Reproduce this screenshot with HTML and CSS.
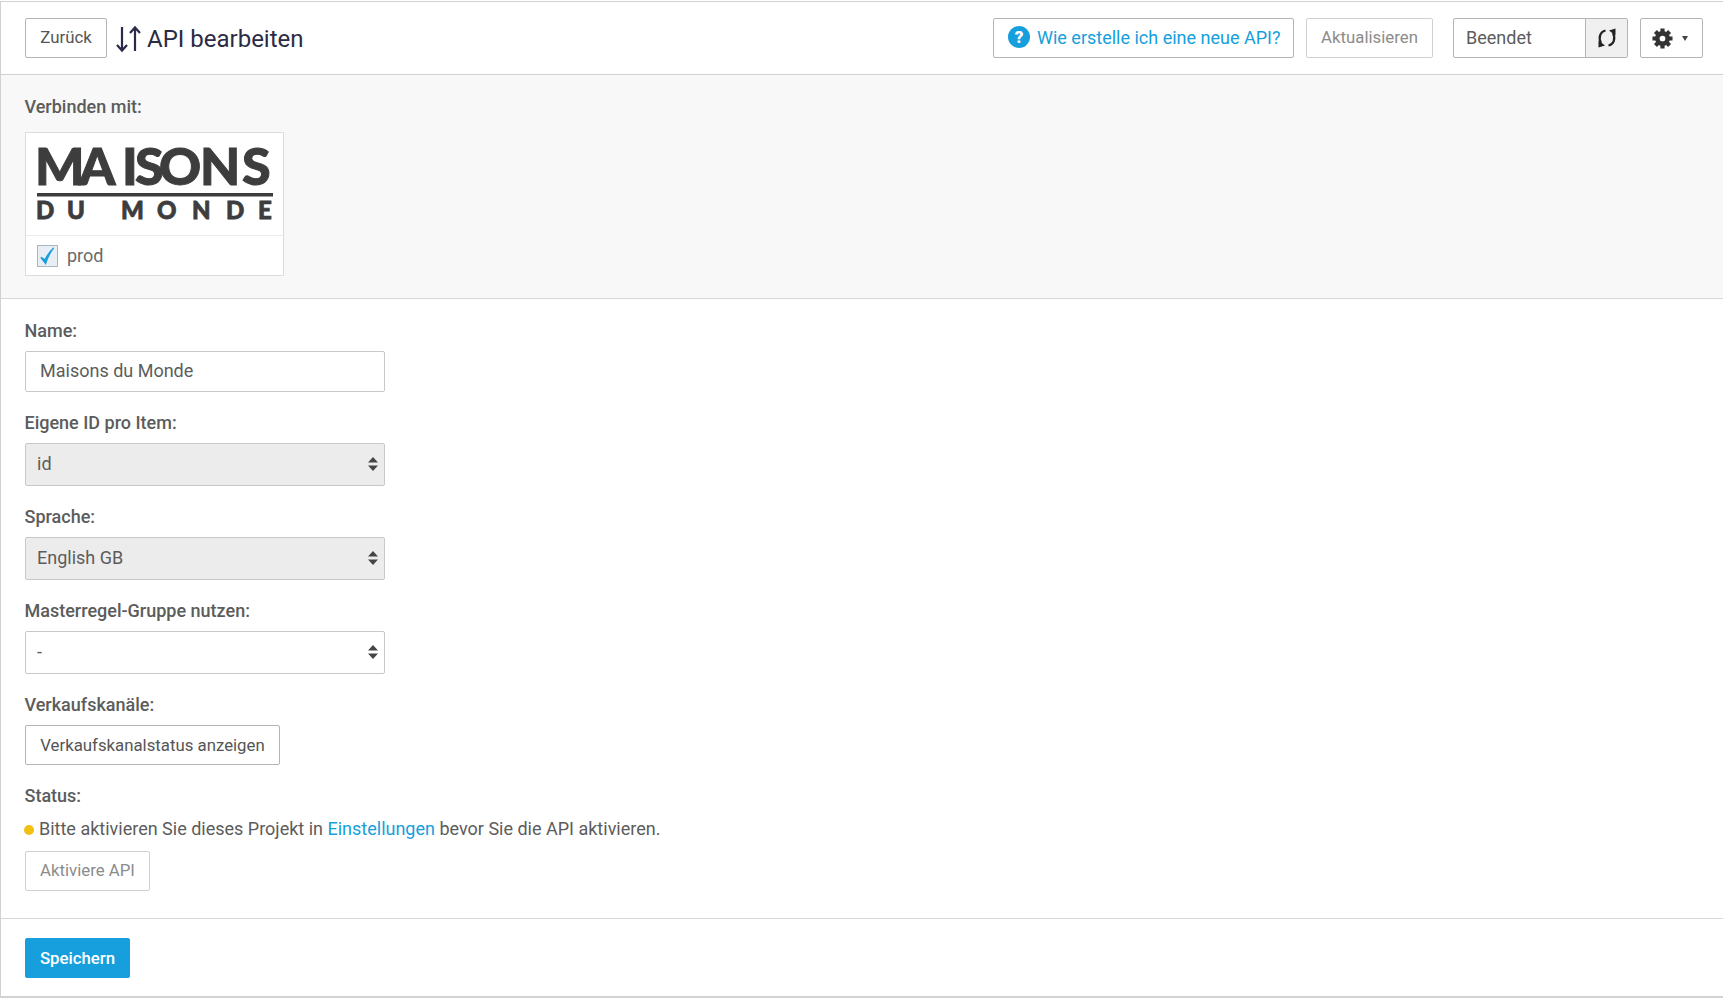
FILE: index.html
```html
<!DOCTYPE html>
<html lang="de">
<head>
<meta charset="utf-8">
<title>API bearbeiten</title>
<link rel="stylesheet" href="styles.css">
</head>
<body>
<main class="panel">
  <header class="topbar">
    <button class="btn back-btn" type="button">Zurück</button>
    <svg class="sort-icon" width="26" height="28" viewBox="0 0 26 28" aria-hidden="true">
      <path d="M7 2V25M2 20L7 25.5L12 20M20 26V3M15 8L20 2.5L25 8" fill="none" stroke="#2a2a4a" stroke-width="2.2"/>
    </svg>
    <h1 class="title">API bearbeiten</h1>
    <div class="spacer"></div>
    <a class="btn help-btn" href="#"><span class="help-dot">?</span>Wie erstelle ich eine neue API?</a>
    <button class="btn muted update-btn" type="button">Aktualisieren</button>
    <div class="status-group">
      <span class="status-value">Beendet</span>
      <span class="status-refresh">
        <svg width="20" height="20" viewBox="0 0 20 20" aria-hidden="true">
          <path d="M8.5 2.5C3.5 3.5 1 9 4 15M11.5 17.5C16.5 16.5 19 11 16 5" fill="none" stroke="#222" stroke-width="2.2"/>
          <path d="M1.5 12.5L8 17.5L1.5 19.5ZM18.5 7.5L12 2.5L18.5 0.5Z" fill="#222"/>
        </svg>
      </span>
    </div>
    <button class="btn gear-btn" type="button" aria-label="Einstellungen">
      <svg width="21" height="21" viewBox="0 0 22 22" aria-hidden="true">
        <circle cx="11" cy="11" r="5.4" fill="none" stroke="#333" stroke-width="4.8"/>
        <g stroke="#333" stroke-width="4.4">
          <path d="M11 0.5V5M11 17V21.5M0.5 11H5M17 11H21.5M3.6 3.6L6.7 6.7M15.3 15.3L18.4 18.4M18.4 3.6L15.3 6.7M6.7 15.3L3.6 18.4"/>
        </g>
      </svg>
      <span class="caret"></span>
    </button>
  </header>

  <section class="connect">
    <div class="label">Verbinden mit:</div>
    <div class="shop-card">
      <div class="shop-logo">
        <svg width="259" height="103" viewBox="0 0 259 103" role="img" aria-label="Maisons du Monde">
          <text class="logo-big" y="52" x="9 53 96 109 133 174 216">MAISONS</text>
          <rect x="11" y="60" width="236" height="3.5" fill="#3d3d3d"/>
          <text class="logo-small" y="86" x="10 41 78 95 131 166 200 232">DU MONDE</text>
        </svg>
      </div>
      <label class="shop-check">
        <span class="checkbox">
          <svg width="20" height="20" viewBox="0 0 20 20" aria-hidden="true">
            <path d="M3 11.5L8 18C10 11.5 12.5 6.5 16.5 1.5C12.5 5 9.5 9.5 7.5 14Z" fill="#169fdc" stroke="#169fdc" stroke-width="1.4"/>
          </svg>
        </span>
        prod
      </label>
    </div>
  </section>

  <section class="form">
    <div class="field">
      <label class="label">Name:</label>
      <input class="control text-input" type="text" value="Maisons du Monde">
    </div>
    <div class="field">
      <label class="label">Eigene ID pro Item:</label>
      <div class="select-wrap">
        <select class="control select disabled"><option>id</option></select>
        <svg class="select-arrows" width="10" height="14" viewBox="0 0 10 14" aria-hidden="true"><path d="M5 0L10 5.5H0ZM5 14L0 8.5H10Z" fill="#444"/></svg>
      </div>
    </div>
    <div class="field">
      <label class="label">Sprache:</label>
      <div class="select-wrap">
        <select class="control select disabled"><option>English GB</option></select>
        <svg class="select-arrows" width="10" height="14" viewBox="0 0 10 14" aria-hidden="true"><path d="M5 0L10 5.5H0ZM5 14L0 8.5H10Z" fill="#444"/></svg>
      </div>
    </div>
    <div class="field">
      <label class="label">Masterregel-Gruppe nutzen:</label>
      <div class="select-wrap">
        <select class="control select"><option>-</option></select>
        <svg class="select-arrows" width="10" height="14" viewBox="0 0 10 14" aria-hidden="true"><path d="M5 0L10 5.5H0ZM5 14L0 8.5H10Z" fill="#444"/></svg>
      </div>
    </div>
    <div class="field">
      <label class="label">Verkaufskanäle:</label>
      <button class="btn channel-btn" type="button">Verkaufskanalstatus anzeigen</button>
    </div>
    <div class="field status-field">
      <label class="label">Status:</label>
      <p class="status-line"><span class="dot"></span>Bitte aktivieren Sie dieses Projekt in <a href="#">Einstellungen</a> bevor Sie die API aktivieren.</p>
      <button class="btn muted activate-btn" type="button">Aktiviere API</button>
    </div>
  </section>

  <footer class="actions">
    <button class="btn save-btn" type="button">Speichern</button>
  </footer>
</main>
</body>
</html>
```

FILE: styles.css
```css
* { box-sizing: border-box; }

html, body {
  margin: 0;
  background: #fff;
}

body {
  padding-top: 1px;
  font-family: Roboto, "Liberation Sans", sans-serif;
  font-size: 18px;
  color: #5c5c5c;
}

.panel {
  height: 997px;
  border: 1px solid #d2d2d2;
  border-width: 1px 0 2px 1px;
  display: flex;
  flex-direction: column;
}

.topbar {
  height: 73px;
  flex: none;
  padding: 16px 20px 0 24px;
  display: flex;
  align-items: flex-start;
  border-bottom: 1px solid #cfcfcf;
}

.btn {
  height: 40px;
  display: inline-flex;
  align-items: center;
  justify-content: center;
  padding: 0 0 1px;
  background: #fff;
  border: 1px solid #b4b4b4;
  border-radius: 2px;
  font-family: inherit;
  font-size: 16.8px;
  color: #555;
  text-decoration: none;
  white-space: nowrap;
}

.back-btn {
  width: 82px;
  padding-bottom: 2px;
}

.sort-icon {
  margin: 7px 0 0 8px;
  flex: none;
}

.title {
  margin: 1px 0 0 6px;
  font-size: 24px;
  line-height: 40px;
  font-weight: 400;
  color: #2b2b45;
}

.spacer { flex: 1; }

.help-btn {
  width: 301px;
  padding: 0 0 2px 14px;
  justify-content: flex-start;
  font-size: 18px;
  color: #169fdc;
}

.help-dot {
  width: 22px;
  height: 22px;
  margin-right: 7px;
  border-radius: 50%;
  background: #169fdc;
  color: #fff;
  font-size: 17px;
  font-weight: 900;
  line-height: 22px;
  text-align: center;
}

.muted {
  color: #8c8c8c;
  border-color: #d0d0d0;
}

.update-btn {
  width: 127px;
  margin-left: 12px;
  padding-bottom: 2px;
}

.status-group {
  width: 175px;
  height: 40px;
  margin-left: 20px;
  display: flex;
  border: 1px solid #b4b4b4;
  border-radius: 2px;
}

.status-value {
  flex: 1;
  padding-left: 12px;
  line-height: 38px;
  font-size: 18px;
  color: #5c5c5c;
}

.status-refresh {
  width: 42px;
  display: flex;
  align-items: center;
  justify-content: center;
  background: #f0f0f0;
  border-left: 1px solid #b4b4b4;
}

.gear-btn {
  width: 63px;
  margin-left: 12px;
  padding: 0 0 0 11px;
  justify-content: flex-start;
  gap: 9px;
}

.caret {
  width: 0;
  height: 0;
  border-left: 3.5px solid transparent;
  border-right: 3.5px solid transparent;
  border-top: 5px solid #444;
}

.connect {
  height: 224px;
  flex: none;
  padding: 21px 24px 0;
  background: #f8f8f8;
  border-bottom: 1px solid #d8d8d8;
}

.label {
  display: block;
  margin-left: -0.5px;
  font-size: 18px;
  line-height: 22px;
  font-weight: 500;
  color: #5c5c5c;
}

.shop-card {
  width: 259px;
  height: 144px;
  margin-top: 14px;
  background: #fff;
  border: 1px solid #dcdcdc;
}

.shop-logo {
  height: 103px;
  border-bottom: 1px solid #ececec;
  line-height: 0;
}

.shop-logo svg { display: block; }

.logo-big {
  font-family: Lato, "Liberation Sans", sans-serif;
  font-weight: 900;
  font-size: 52px;
  fill: #3d3d3d;
  stroke: #3d3d3d;
  stroke-width: 1;
}

.logo-small {
  font-family: Lato, "Liberation Sans", sans-serif;
  font-weight: 900;
  font-size: 24px;
  fill: #3d3d3d;
  stroke: #3d3d3d;
  stroke-width: 0.8;
}

.shop-check {
  height: 39px;
  display: flex;
  align-items: center;
  padding-left: 11px;
  font-size: 18px;
  color: #6a6a6a;
}

.checkbox {
  width: 21px;
  height: 22px;
  margin-right: 9px;
  display: flex;
  align-items: center;
  justify-content: center;
  background: #e8eef3;
  border: 1px solid #a9b7c2;
}

.form {
  flex: 1;
  padding: 21px 24px 0;
  border-bottom: 1px solid #d8d8d8;
}

.field { margin-bottom: 20px; }

.field .label { margin-bottom: 9px; }

.control {
  display: block;
  width: 360px;
  font-family: inherit;
  font-size: 18px;
  color: #5c5c5c;
  background: #fff;
  border: 1px solid #c8c8c8;
  border-radius: 2px;
  outline: none;
}

.text-input {
  height: 41px;
  padding: 0 14px 2px;
}

.select-wrap {
  position: relative;
  width: 360px;
}

.select {
  height: 43px;
  padding: 0 11px 2px;
  appearance: none;
  -webkit-appearance: none;
  opacity: 1;
}

.select.disabled { background: #ececec; }

.select-arrows {
  position: absolute;
  right: 7px;
  top: 14px;
  pointer-events: none;
}

.channel-btn { width: 255px; }

.status-field { margin-bottom: 0; }

.status-field .label { margin-bottom: 10px; }

.status-line {
  margin: 0 0 10px;
  height: 24px;
  line-height: 24px;
  display: block;
  white-space: nowrap;
}

.status-line a { color: #169fdc; text-decoration: none; }

.dot {
  display: inline-block;
  width: 10px;
  height: 10px;
  margin: 0 5px 0 -1px;
  border-radius: 50%;
  background: #f2c014;
}

.activate-btn {
  width: 125px;
  padding-bottom: 2px;
}

.actions {
  height: 77px;
  flex: none;
  padding: 19px 24px 0;
}

.save-btn {
  width: 105px;
  background: #169fdc;
  border-color: #169fdc;
  color: #fff;
  font-weight: 500;
}
```
